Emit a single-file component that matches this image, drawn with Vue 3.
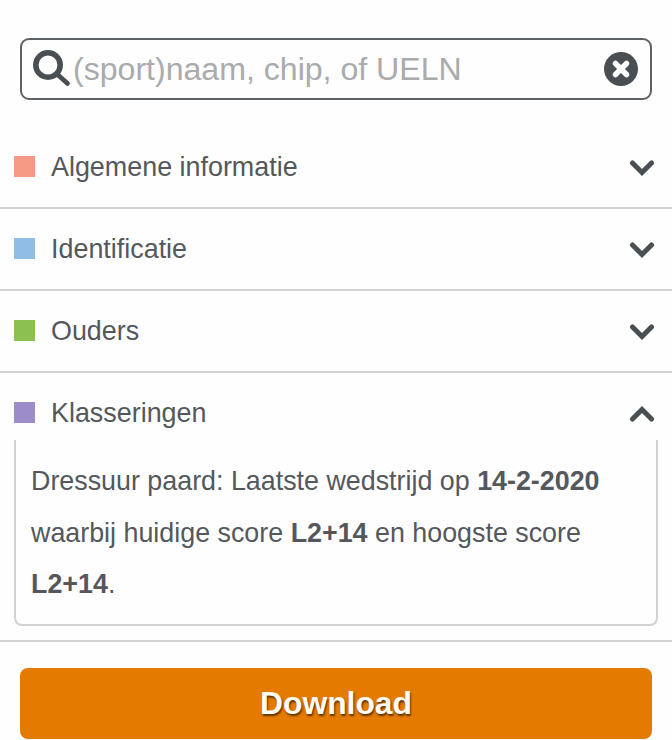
<script setup>
const sections = [
  { name: 'Algemene informatie', color: '#f59a85' },
  { name: 'Identificatie', color: '#8fbde3' },
  { name: 'Ouders', color: '#8cc152' },
  { name: 'Klasseringen', color: '#9b8dc8', open: true }
]
</script>

<template>
  <div class="page">
    <div class="search">
      <svg class="search-icon" viewBox="0 0 38 38">
        <circle cx="15" cy="15" r="12.2" fill="none" stroke="#4a4f54" stroke-width="5.6" />
        <path d="M24 24 L34.5 33.5" fill="none" stroke="#4a4f54" stroke-width="4.8" stroke-linecap="round" />
      </svg>
      <span class="placeholder">(sport)naam, chip, of UELN</span>
      <svg class="clear-icon" viewBox="0 0 34 34">
        <circle cx="17" cy="17" r="17" fill="#4a4f54" />
        <path d="M11.5 11.5 L22.5 22.5 M22.5 11.5 L11.5 22.5" fill="none" stroke="#fff" stroke-width="5.5" stroke-linecap="round" />
      </svg>
    </div>

    <div class="list">
      <div v-for="s in sections" :key="s.name" class="section" :class="{ open: s.open }">
        <div class="head">
          <span class="square" :style="{ background: s.color }"></span>
          <span class="name">{{ s.name }}</span>
          <svg class="chevron" viewBox="0 0 26 18">
            <path :d="s.open ? 'M3.5 14 L13 4.5 L22.5 14' : 'M3.5 4 L13 13.5 L22.5 4'" fill="none" stroke="#4a4f54" stroke-width="5" stroke-linecap="round" stroke-linejoin="miter" />
          </svg>
        </div>
        <div v-if="s.open" class="panel">
          <p>Dressuur paard: Laatste wedstrijd op <b>14-2-2020</b> waarbij huidige score <b>L2+14</b> en hoogste score <b>L2+14</b>.</p>
        </div>
      </div>
    </div>

    <button class="download">Download</button>
  </div>
</template>

<style scoped>
.page {
  width: 672px;
  height: 740px;
  overflow: hidden;
  padding-top: 38px;
  box-sizing: border-box;
  background: #fefefe;
  font-family: "Liberation Sans", Arial, sans-serif;
  color: #54585c;
}

.search {
  display: flex;
  align-items: center;
  box-sizing: border-box;
  height: 62px;
  margin: 0 20px;
  padding: 0 12px 0 11px;
  border: 2px solid #5e6266;
  border-radius: 9px;
}

.search-icon {
  width: 38px;
  height: 38px;
  flex: none;
}

.placeholder {
  flex: 1;
  margin-left: 2px;
  font-size: 32.1px;
  color: #a9abad;
  white-space: nowrap;
}

.clear-icon {
  width: 34px;
  height: 34px;
  flex: none;
}

.list {
  margin-top: 27px;
}

.section {
  border-bottom: 2px solid #d2d2d2;
  height: 82px;
  box-sizing: border-box;
}

.section.open {
  height: 269px;
}

.head {
  display: flex;
  align-items: center;
  height: 80px;
  padding: 0 17px 0 14px;
}

.square {
  width: 21px;
  height: 21px;
  flex: none;
  margin-bottom: 2px;
}

.name {
  flex: 1;
  margin-left: 16px;
  padding-top: 1px;
  font-size: 26.9px;
}

.chevron {
  width: 26px;
  height: 18px;
  flex: none;
  margin-top: 2px;
}

.panel {
  margin: -13px 14px 0 14px;
  height: 186px;
  box-sizing: border-box;
  padding: 16px 15px 0;
  border: 2px solid #d2d2d2;
  border-top: 0;
  border-radius: 0 0 8px 8px;
}

.panel p {
  margin: 0;
  font-size: 26.85px;
  line-height: 51.5px;
}

.download {
  display: block;
  width: 632px;
  height: 71px;
  margin: 26px 20px 0;
  padding: 0;
  border: 0;
  border-radius: 8px;
  background: #e57a00;
  color: #fffdf5;
  font-family: "Liberation Sans", Arial, sans-serif;
  font-size: 31.8px;
  font-weight: 700;
  text-shadow: 1px 2px 2px #5e3200;
}
</style>
